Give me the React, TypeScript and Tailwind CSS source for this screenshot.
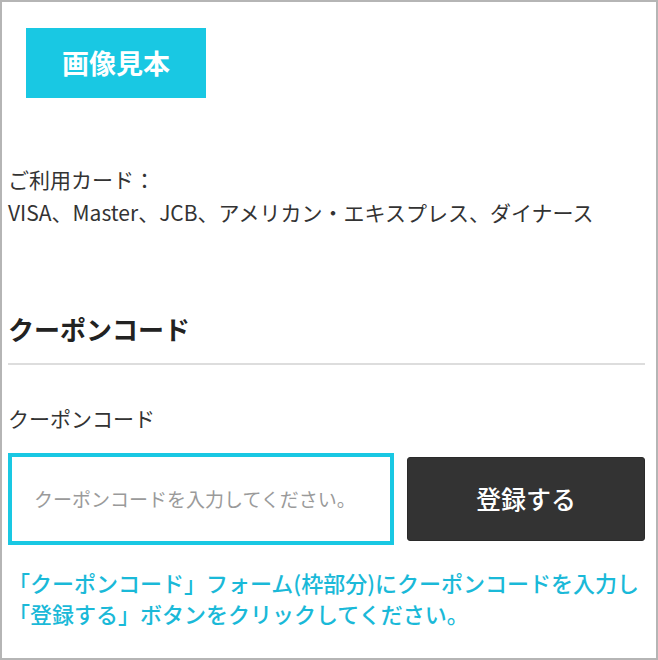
import React from 'react';

const font = { fontFamily: '"Noto Sans CJK JP", "Noto Sans", sans-serif' };

export default function App() {
  return (
    <div
      className="w-[658px] h-[660px] border-2 border-[#b5b5b5] bg-white pl-[6px] pr-[11px] text-[#333333]"
      style={font}
    >
      {/* Sample badge */}
      <div className="mt-[26px] ml-[18px] flex h-[70px] w-[180px] items-center justify-center bg-[#19c8e3]">
        <span className="text-[27px] font-bold text-white">画像見本</span>
      </div>

      {/* Cards */}
      <div className="mt-[65px] text-[21px] leading-[33px]">
        <p>ご利用カード：</p>
        <p>VISA、Master、JCB、アメリカン・エキスプレス、ダイナース</p>
      </div>

      {/* Coupon section */}
      <h2 className="mt-[82px] border-b-2 border-[#dddddd] pb-[16px] text-[26px] font-bold leading-[36px] text-[#222222]">
        クーポンコード
      </h2>

      <p className="mt-[38px] text-[21px] leading-[30px]">クーポンコード</p>

      <div className="mt-[20px] flex items-center gap-[13px]">
        <div className="flex h-[92px] w-[386px] items-center border-4 border-[#19c8e3] pl-[22px]">
          <input
            className="w-full bg-transparent text-[19px] text-[#333] outline-none placeholder:text-[#9a9a9a]"
            style={font}
            placeholder="クーポンコードを入力してください。"
          />
        </div>
        <button
          className="flex h-[84px] flex-1 items-center justify-center rounded-[3px] border border-[#2a2a2a] bg-[#333333] text-[25px] font-medium text-white"
          style={font}
        >
          登録する
        </button>
      </div>

      <div className="mt-[22px] text-[22px] font-medium leading-[31px] text-[#1ab9d8]">
        <p>「クーポンコード」フォーム(枠部分)にクーポンコードを入力し</p>
        <p>「登録する」ボタンをクリックしてください。</p>
      </div>
    </div>
  );
}
